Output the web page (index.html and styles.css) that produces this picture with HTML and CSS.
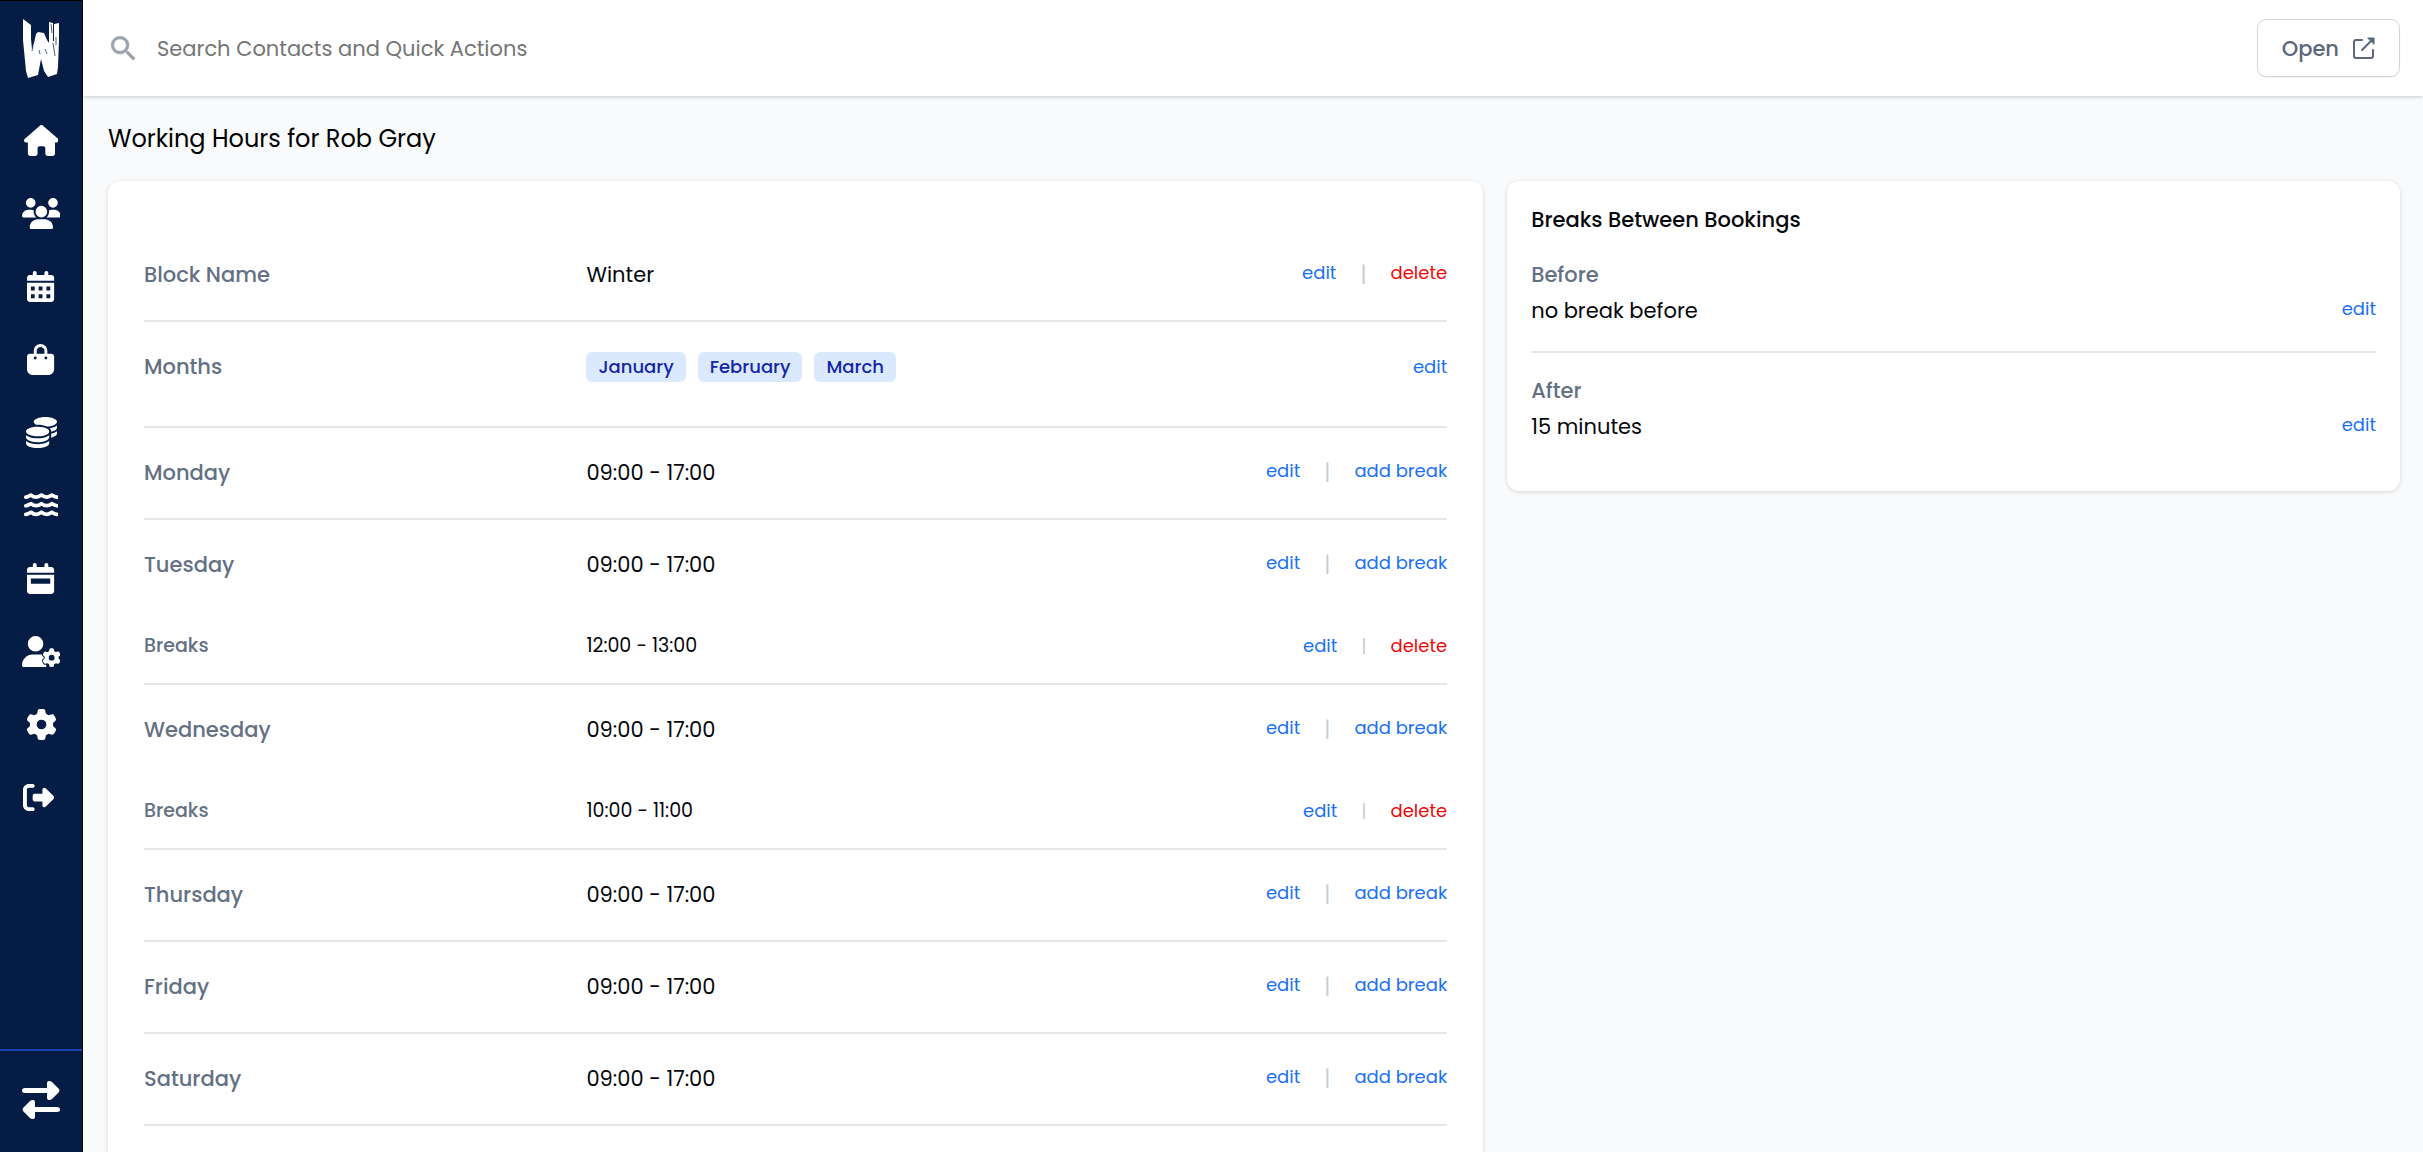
FILE: index.html
```html
<!DOCTYPE html>
<html lang="en">
<head>
    <meta charset="UTF-8">
    <meta name="viewport" content="width=device-width, initial-scale=1.0">
    <title>Working Hours</title>
    <link rel="stylesheet" href="styles.css">
</head>
<body>
    <div class="app">
        <nav class="sidebar" aria-label="Main">
            <a href="#" class="logo" aria-label="Dashboard">
                <svg viewBox="0 0 36 60" width="36" height="60">
                    <path fill="#fff" d="M0 0L8 6L8 20L9 30L11 24L13 15L15 13L21 14L24 21L26 24L26 3L30 4L30 22L31 22L31 5L36 4L36 21L35 48L34 55L25 58L21 52L18 40L15 56L5 59L3 52L0 21Z"/>
                    <path stroke="#051c44" stroke-width="1" stroke-opacity=".7" fill="none" d="M28 5L29 14M30 24L32 37M16 31L17 35M10 27L9 32M22 30L24 35M33 18L33 26"/>
                </svg>
            </a>
            <a href="#" class="nav-link" aria-label="Home">
                <svg viewBox="0 0 576 512"><path d="M575.8 255.5c0 18-15 32.1-32 32.1h-32l.7 160.2c0 2.7-.2 5.4-.5 8.1V472c0 22.1-17.9 40-40 40H456c-1.1 0-2.2 0-3.3-.1c-1.4 .1-2.8 .1-4.2 .1H416 392c-22.1 0-40-17.9-40-40V448 384c0-17.7-14.3-32-32-32H256c-17.7 0-32 14.3-32 32v64 24c0 22.1-17.9 40-40 40H160 128.1c-1.5 0-3-.1-4.5-.2c-1.2 .1-2.4 .2-3.6 .2H104c-22.1 0-40-17.9-40-40V360c0-.9 0-1.9 .1-2.8V287.6H32c-18 0-32-14-32-32.1c0-9 3-17 10-24L266.4 8c7-7 15-8 22-8s15 2 21 7L564.8 231.5c8 7 12 15 11 24z"/></svg>
            </a>
            <a href="#" class="nav-link" aria-label="Contacts">
                <svg viewBox="0 0 640 512"><path d="M144 0a80 80 0 1 1 0 160A80 80 0 1 1 144 0zM512 0a80 80 0 1 1 0 160A80 80 0 1 1 512 0zM0 298.7C0 239.8 47.8 192 106.7 192h42.7c15.9 0 31 3.5 44.6 9.7c-1.3 7.2-1.9 14.7-1.9 22.3c0 38.2 16.8 72.5 43.3 96c-.2 0-.4 0-.7 0H21.3C9.6 320 0 310.4 0 298.7zM405.3 320c-.2 0-.4 0-.7 0c26.6-23.5 43.3-57.8 43.3-96c0-7.6-.7-15-1.9-22.3c13.6-6.3 28.7-9.7 44.6-9.7h42.7C592.2 192 640 239.8 640 298.7c0 11.8-9.6 21.3-21.3 21.3H405.3zM224 224a96 96 0 1 1 192 0 96 96 0 1 1 -192 0zM128 485.3C128 411.7 187.7 352 261.3 352H378.7C452.3 352 512 411.7 512 485.3c0 14.7-11.9 26.7-26.7 26.7H154.7c-14.7 0-26.7-11.9-26.7-26.7z"/></svg>
            </a>
            <a href="#" class="nav-link" aria-label="Calendar">
                <svg viewBox="0 0 448 512"><path fill-rule="evenodd" d="M128 0c17.7 0 32 14.3 32 32V64H288V32c0-17.7 14.3-32 32-32s32 14.3 32 32V64h48c26.5 0 48 21.5 48 48v48H0V112C0 85.5 21.5 64 48 64H96V32c0-17.7 14.3-32 32-32zM0 192H448V464c0 26.5-21.5 48-48 48H48c-26.5 0-48-21.5-48-48V192zM64 256v64h64v-64zM192 256v64h64v-64zM320 256v64h64v-64zM64 384v64h64v-64zM192 384v64h64v-64zM320 384v64h64v-64z"/></svg>
            </a>
            <a href="#" class="nav-link" aria-label="Shop">
                <svg viewBox="0 0 448 512"><path d="M160 112c0-35.3 28.7-64 64-64s64 28.7 64 64v48H160V112zm-48 48H48c-26.5 0-48 21.5-48 48V416c0 53 43 96 96 96H352c53 0 96-43 96-96V208c0-26.5-21.5-48-48-48H336V112C336 50.1 285.9 0 224 0S112 50.1 112 112v48zm24 48a24 24 0 1 1 0 48 24 24 0 1 1 0-48zm152 24a24 24 0 1 1 48 0 24 24 0 1 1-48 0z"/></svg>
            </a>
            <a href="#" class="nav-link" aria-label="Payments">
                <svg viewBox="0 0 512 512"><path d="M512 80c0 18-14.3 34.6-38.4 48c-29.1 16.1-72.5 27.5-122.3 30.9c-3.7-1.8-7.4-3.5-11.3-5C300.6 137.4 248.2 128 192 128c-8.3 0-16.4 .2-24.5 .6l-1.1-.6C142.3 114.6 128 98 128 80c0-44.2 86-80 192-80S512 35.8 512 80zM160.7 161.1c10.2-.7 20.7-1.1 31.3-1.1c62.2 0 117.4 12.3 152.5 31.4C369.3 204.9 384 221.7 384 240c0 4-.7 7.9-2.1 11.7c-4.6 13.2-17 25.3-35 35.5c-.1 .1-.3 .1-.4 .2c-.3 .2-.6 .3-.9 .5c-35 19.4-90.8 32-153.6 32c-59.6 0-112.9-11.3-148.2-29.1c-1.9-.9-3.7-1.9-5.5-2.9C14.3 274.6 0 258 0 240c0-34.8 53.4-64.5 128-75.4c10.5-1.5 21.4-2.7 32.7-3.5zM416 240c0-21.9-10.6-39.9-24.1-53.4c28.3-4.4 54.2-11.4 76.2-20.5c16.3-6.8 31.5-15.2 43.9-25.5V176c0 19.3-16.5 37.1-43.8 50.9c-14.6 7.4-32.4 13.7-52.4 18.5c.1-1.8 .2-3.5 .2-5.3zm-32 96c0 18-14.3 34.6-38.4 48c-1.8 1-3.6 1.9-5.5 2.9C304.9 404.7 251.6 416 192 416c-62.8 0-118.6-12.6-153.6-32C14.3 370.6 0 354 0 336V300.6c12.5 10.3 27.6 18.7 43.9 25.5C83.4 342.6 135.8 352 192 352s108.6-9.4 148.1-25.9c7.8-3.2 15.3-6.9 22.4-10.9c6.1-3.4 11.8-7.2 17.2-11.2c1.5-1.1 2.9-2.3 4.3-3.4V304v5.7V336zm32 0V304 278.1c19-4.2 36.5-9.5 52.1-16c16.3-6.8 31.5-15.2 43.9-25.5V272c0 10.5-5 21-14.9 30.9c-16.3 16.3-45 29.7-81.3 38.4c.1-1.7 .2-3.5 .2-5.3zM192 448c56.2 0 108.6-9.4 148.1-25.9c16.3-6.8 31.5-15.2 43.9-25.5V432c0 44.2-86 80-192 80S0 476.2 0 432V396.6c12.5 10.3 27.6 18.7 43.9 25.5C83.4 438.6 135.8 448 192 448z"/></svg>
            </a>
            <a href="#" class="nav-link" aria-label="Waters">
                <svg viewBox="0 0 576 512">
                    <g fill="none" stroke="#fff" stroke-width="62" stroke-linecap="round" stroke-linejoin="round">
                        <path d="M31 118C70 112 85 96 117 84C150 112 170 118 202 118C240 118 255 108 288 84C320 108 336 118 374 118C408 118 426 110 459 84C490 100 510 114 545 118"/>
                        <path d="M31 260C70 254 85 238 117 226C150 254 170 260 202 260C240 260 255 250 288 226C320 250 336 260 374 260C408 260 426 252 459 226C490 242 510 256 545 260"/>
                        <path d="M31 402C70 396 85 380 117 368C150 396 170 402 202 402C240 402 255 392 288 368C320 392 336 402 374 402C408 402 426 394 459 368C490 384 510 398 545 402"/>
                    </g>
                </svg>
            </a>
            <a href="#" class="nav-link" aria-label="Bookings">
                <svg viewBox="0 0 448 512"><path fill-rule="evenodd" d="M128 0c17.7 0 32 14.3 32 32V64H288V32c0-17.7 14.3-32 32-32s32 14.3 32 32V64h48c26.5 0 48 21.5 48 48v48H0V112C0 85.5 21.5 64 48 64H96V32c0-17.7 14.3-32 32-32zM0 192H448V464c0 26.5-21.5 48-48 48H48c-26.5 0-48-21.5-48-48V192zM64 256v88h320v-88z"/></svg>
            </a>
            <a href="#" class="nav-link" aria-label="Staff">
                <svg viewBox="0 0 640 512">
                    <path d="M224 0a128 128 0 1 1 0 256A128 128 0 1 1 224 0zM178 304C80 304 0 384 0 482C0 499 13 512 30 512H400V304z"/>
                    <g transform="translate(336 204) scale(.6)">
                        <path id="gear" class="gear-gap" d="M495.9 166.6c3.2 8.7 .5 18.4-6.4 24.6l-43.3 39.4c1.1 8.3 1.7 16.8 1.7 25.4s-.6 17.1-1.7 25.4l43.3 39.4c6.9 6.2 9.6 15.9 6.4 24.6c-4.4 11.9-9.7 23.3-15.8 34.3l-4.7 8.1c-6.6 11-14 21.4-22.1 31.2c-5.9 7.2-15.7 9.6-24.5 6.8l-55.7-17.7c-13.4 10.3-28.2 18.9-44 25.4l-12.5 57.1c-2 9.1-9 16.3-18.2 17.8c-13.8 2.3-28 3.5-42.5 3.5s-28.7-1.2-42.5-3.5c-9.2-1.5-16.2-8.7-18.2-17.8l-12.5-57.1c-15.8-6.5-30.6-15.1-44-25.4L83.1 425.9c-8.8 2.8-18.6 .3-24.5-6.8c-8.1-9.8-15.5-20.2-22.1-31.2l-4.7-8.1c-6.1-11-11.4-22.4-15.8-34.3c-3.2-8.7-.5-18.4 6.4-24.6l43.3-39.4C64.6 273.1 64 264.6 64 256s.6-17.1 1.7-25.4L22.4 191.2c-6.9-6.2-9.6-15.9-6.4-24.6c4.4-11.9 9.7-23.3 15.8-34.3l4.7-8.1c6.6-11 14-21.4 22.1-31.2c5.9-7.2 15.7-9.6 24.5-6.8l55.7 17.7c13.4-10.3 28.2-18.9 44-25.4l12.5-57.1c2-9.1 9-16.3 18.2-17.8C227.3 1.2 241.5 0 256 0s28.7 1.2 42.5 3.5c9.2 1.5 16.2 8.7 18.2 17.8l12.5 57.1c15.8 6.5 30.6 15.1 44 25.4l55.7-17.7c8.8-2.8 18.6-.3 24.5 6.8c8.1 9.8 15.5 20.2 22.1 31.2l4.7 8.1c6.1 11 11.4 22.4 15.8 34.3zM256 336a80 80 0 1 0 0-160 80 80 0 1 0 0 160z"/>
                    </g>
                </svg>
            </a>
            <a href="#" class="nav-link" aria-label="Settings">
                <svg viewBox="0 0 512 512"><use href="#gear"/></svg>
            </a>
            <a href="#" class="nav-link nav-exit" aria-label="Log out">
                <svg viewBox="0 0 512 512"><path d="M377.9 105.9L500.7 228.7c7.2 7.2 11.3 17.1 11.3 27.3s-4.1 20.1-11.3 27.3L377.9 406.1c-6.4 6.4-15 9.9-24 9.9c-18.7 0-33.9-15.2-33.9-33.9l0-62.1-128 0c-17.7 0-32-14.3-32-32l0-64c0-17.7 14.3-32 32-32l128 0 0-62.1c0-18.7 15.2-33.9 33.9-33.9c9 0 17.6 3.6 24 9.9zM160 96L96 96c-17.7 0-32 14.3-32 32l0 256c0 17.7 14.3 32 32 32l64 0c17.7 0 32 14.3 32 32s-14.3 32-32 32l-64 0c-53 0-96-43-96-96L0 128C0 75 43 32 96 32l64 0c17.7 0 32 14.3 32 32s-14.3 32-32 32z"/></svg>
            </a>
            <a href="#" class="switch" aria-label="Switch account">
                <svg viewBox="0 0 38 38" width="38" height="38" fill="#fff">
                    <path d="M3 7H25V2Q25 0 27 0Q29 0 30 1L37 8Q38 10 37 11L30 18Q29 19 27 19Q25 19 25 17V12H3Q0 12 0 9.500Q0 7 3 7Z"/>
                    <path d="M35 26H13V21Q13 19 11 19Q9 19 8 20L1 27Q0 28.500 1 30L8 37Q9 38 11 38Q13 38 13 36V31H35Q38 31 38 28.500Q38 26 35 26Z"/>
                </svg>
            </a>
        </nav>

        <div class="main">
            <header class="header">
                <label for="search" class="search-icon" aria-label="Search">
                    <svg viewBox="0 0 24 24" width="33" height="33"><path fill="#9ca3af" stroke="#9ca3af" stroke-width=".4" d="M15.500 14h-.79l-.28-.27A6.471 6.471 0 0 0 16 9.500 6.500 6.500 0 1 0 9.500 16c1.61 0 3.09-.59 4.23-1.57l.27.28v.79l5 4.99L20.490 19l-4.99-5zm-6 0C7.010 14 5 11.990 5 9.500S7.010 5 9.500 5 14 7.010 14 9.500 11.990 14 9.500 14z"/></svg>
                </label>
                <input type="search" id="search" class="search" placeholder="Search Contacts and Quick Actions">
                <button type="button" class="btn-open">
                    Open
                    <svg viewBox="0 0 22 22" width="22" height="22" fill="none" stroke="#5b677a" stroke-width="2" stroke-linecap="round" stroke-linejoin="round">
                        <path d="M9 3H3Q1 3 1 5V19Q1 21 3 21H18Q20 21 20 19V13M9 13L19 3"/>
                        <path d="M15 1H21V7Z" fill="#5b677a" stroke-width="1"/>
                    </svg>
                </button>
            </header>

            <main class="content">
                <h1 class="title">Working Hours for Rob Gray</h1>
                <div class="columns">
                    <section class="card hours">
                        <div class="row">
                            <div class="label">Block Name</div>
                            <div class="value">Winter</div>
                            <div class="actions"><a href="#">edit</a><span class="sep">|</span><a href="#" class="delete">delete</a></div>
                        </div>
                        <div class="row row-months">
                            <div class="label">Months</div>
                            <div class="value months"><span class="pill">January</span><span class="pill">February</span><span class="pill">March</span></div>
                            <div class="actions"><a href="#">edit</a></div>
                        </div>
                        <div class="row">
                            <div class="label">Monday</div>
                            <div class="value">09:00 - 17:00</div>
                            <div class="actions"><a href="#">edit</a><span class="sep">|</span><a href="#">add break</a></div>
                        </div>
                        <div class="row has-breaks">
                            <div class="label">Tuesday</div>
                            <div class="value">09:00 - 17:00</div>
                            <div class="actions"><a href="#">edit</a><span class="sep">|</span><a href="#">add break</a></div>
                        </div>
                        <div class="row row-break">
                            <div class="label">Breaks</div>
                            <div class="value">12:00 - 13:00</div>
                            <div class="actions"><a href="#">edit</a><span class="sep">|</span><a href="#" class="delete">delete</a></div>
                        </div>
                        <div class="row has-breaks">
                            <div class="label">Wednesday</div>
                            <div class="value">09:00 - 17:00</div>
                            <div class="actions"><a href="#">edit</a><span class="sep">|</span><a href="#">add break</a></div>
                        </div>
                        <div class="row row-break">
                            <div class="label">Breaks</div>
                            <div class="value">10:00 - 11:00</div>
                            <div class="actions"><a href="#">edit</a><span class="sep">|</span><a href="#" class="delete">delete</a></div>
                        </div>
                        <div class="row">
                            <div class="label">Thursday</div>
                            <div class="value">09:00 - 17:00</div>
                            <div class="actions"><a href="#">edit</a><span class="sep">|</span><a href="#">add break</a></div>
                        </div>
                        <div class="row">
                            <div class="label">Friday</div>
                            <div class="value">09:00 - 17:00</div>
                            <div class="actions"><a href="#">edit</a><span class="sep">|</span><a href="#">add break</a></div>
                        </div>
                        <div class="row">
                            <div class="label">Saturday</div>
                            <div class="value">09:00 - 17:00</div>
                            <div class="actions"><a href="#">edit</a><span class="sep">|</span><a href="#">add break</a></div>
                        </div>
                    </section>

                    <section class="card between">
                        <h2 class="card-title">Breaks Between Bookings</h2>
                        <div class="item">
                            <div class="label">Before</div>
                            <div class="item-line"><span class="value">no break before</span><a href="#">edit</a></div>
                        </div>
                        <div class="item">
                            <div class="label">After</div>
                            <div class="item-line"><span class="value">15 minutes</span><a href="#">edit</a></div>
                        </div>
                    </section>
                </div>
            </main>
        </div>
    </div>
</body>
</html>
```
FILE: styles.css
```css
* {
    box-sizing: border-box;
}
body {
    margin: 0;
    font-family: Poppins, Inter, sans-serif;
    font-size: 21px;
    background-color: #f9fafc;
    color: #05070d;
}
a {
    color: #1a70f8;
    text-decoration: none;
}
a:hover {
    text-decoration: underline;
}
.app {
    display: flex;
    height: 100vh;
    overflow: hidden;
}

/* sidebar */
.sidebar {
    display: flex;
    flex-direction: column;
    align-items: center;
    flex: none;
    width: 83px;
    background-color: #051c44;
    border-top: 1px solid #000;
    border-right: 1px solid #000;
}
.logo {
    height: 103px;
    padding-top: 18px;
}
.nav-link {
    display: flex;
    align-items: center;
    justify-content: center;
    width: 100%;
    height: 73px;
}
.nav-link svg {
    height: 31px;
    fill: #fff;
}
.nav-exit {
    padding-right: 6px;
}
.gear-gap {
    stroke: #051c44;
    stroke-width: 50px;
    paint-order: stroke;
}
.switch {
    display: flex;
    align-items: center;
    justify-content: center;
    width: 100%;
    height: 103px;
    margin-top: auto;
    padding-bottom: 4px;
    border-top: 2px solid #1d40b0;
}

/* top bar */
.main {
    display: flex;
    flex-direction: column;
    flex: 1;
    min-width: 0;
}
.header {
    display: flex;
    align-items: center;
    flex: none;
    height: 96px;
    padding: 0 23px 0 24px;
    background-color: #fff;
    box-shadow: 0 1px 4px rgba(0, 0, 0, 0.2);
}
.search-icon {
    display: flex;
}
.search {
    flex: 1;
    padding: 0;
    margin-left: 17px;
    border: none;
    outline: none;
    background: none;
    font-family: inherit;
    font-size: 21px;
}
.search::placeholder {
    color: #757575;
}
.btn-open {
    display: flex;
    align-items: center;
    gap: 14px;
    height: 58px;
    padding: 0 24px;
    border: 1px solid #d1d5db;
    border-radius: 9px;
    background-color: #fff;
    box-shadow: 0 1px 2px rgba(0, 0, 0, 0.06);
    font-family: inherit;
    font-size: 21px;
    font-weight: 500;
    color: #5b677a;
    cursor: pointer;
}

/* page */
.content {
    flex: 1;
    min-height: 0;
    padding: 25px 23px 24px 25px;
    overflow: hidden;
}
.title {
    margin: 0 0 24px;
    font-size: 24px;
    font-weight: 400;
    line-height: 36px;
    color: #000;
}
.columns {
    display: flex;
    align-items: flex-start;
    gap: 24px;
}
.card {
    background-color: #fff;
    border-radius: 12px;
    box-shadow: 0 1px 4px rgba(0, 0, 0, 0.14);
}
.hours {
    flex: none;
    width: 60%;
    padding: 49px 36px 48px;
}
.row {
    display: grid;
    grid-template-columns: repeat(3, 1fr);
    column-gap: 24px;
    padding: 28px 0;
    border-bottom: 2px solid #e5e7eb;
    line-height: 34px;
}
.row-months {
    padding-bottom: 42px;
}
.has-breaks {
    padding-bottom: 30px;
    border-bottom: none;
}
.row-break {
    padding: 20px 0 23px;
    line-height: 28px;
}
.label {
    font-weight: 500;
    color: #647084;
}
.row-break .label,
.row-break .value {
    font-size: 19px;
}
.actions {
    display: flex;
    justify-content: flex-end;
    gap: 24px;
    font-size: 18px;
    line-height: 30px;
}
.row-months .actions {
    line-height: 34px;
}
.row-break .actions {
    line-height: 28px;
}
.sep {
    font-size: 21px;
    line-height: 34px;
    color: #c8cdd4;
}
.row-break .sep {
    font-size: 18px;
    line-height: 28px;
}
.delete {
    color: #ee0808;
}
.months {
    display: flex;
    align-items: center;
    gap: 12px;
}
.pill {
    padding: 0 12px;
    border-radius: 6px;
    background-color: #dbe9fe;
    font-size: 18px;
    font-weight: 500;
    line-height: 30px;
    color: #1426a8;
}

/* breaks between bookings */
.between {
    flex: 1;
    padding: 24px;
}
.card-title {
    margin: 0 0 2px;
    font-size: 21px;
    font-weight: 500;
    line-height: 30px;
}
.item {
    padding: 20px 0 22px;
    border-bottom: 2px solid #e5e7eb;
    line-height: 36px;
}
.item:last-child {
    border-bottom: none;
}
.item-line {
    display: flex;
    justify-content: space-between;
}
.item-line a {
    font-size: 18px;
    line-height: 32px;
}
```
